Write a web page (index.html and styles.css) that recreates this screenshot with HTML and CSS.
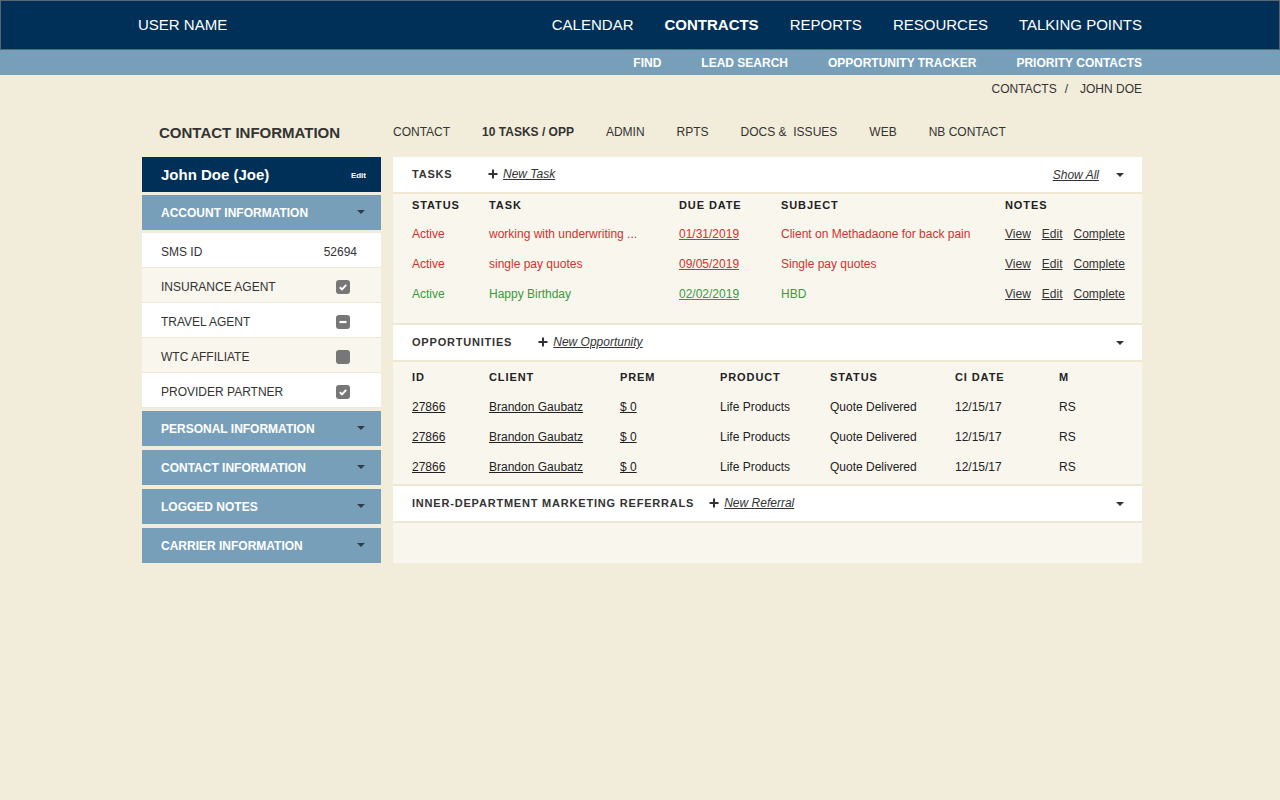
FILE: index.html
```html
<!DOCTYPE html>
<html lang="en">
<head>
<meta charset="utf-8">
<title>Contact Information</title>
<link rel="stylesheet" href="styles.css">
</head>
<body>
<header class="topbar">
  <div class="wrap topbar-inner">
    <div class="user">USER NAME</div>
    <nav class="mainnav">
      <a>CALENDAR</a>
      <a class="active">CONTRACTS</a>
      <a>REPORTS</a>
      <a>RESOURCES</a>
      <a>TALKING POINTS</a>
    </nav>
  </div>
</header>
<div class="subbar">
  <nav class="wrap subnav">
    <a>FIND</a>
    <a>LEAD SEARCH</a>
    <a>OPPORTUNITY TRACKER</a>
    <a>PRIORITY CONTACTS</a>
  </nav>
</div>
<div class="wrap crumbs">
  <span>CONTACTS</span><span class="slash">/</span><span>JOHN DOE</span>
</div>
<div class="wrap page">
  <div class="tabrow">
    <h1 class="pagetitle">CONTACT INFORMATION</h1>
    <nav class="tabs">
      <a>CONTACT</a>
      <a class="active">10 TASKS / OPP</a>
      <a>ADMIN</a>
      <a>RPTS</a>
      <a>DOCS &amp;&nbsp; ISSUES</a>
      <a>WEB</a>
      <a>NB CONTACT</a>
    </nav>
  </div>
  <div class="columns">
    <aside class="sidebar">
      <div class="namebar"><span class="name">John Doe (Joe)</span><a class="edit">Edit</a></div>
      <div class="bar"><span>ACCOUNT INFORMATION</span><i class="caret"></i></div>
      <div class="info">
        <div class="irow"><span>SMS ID</span><span class="val">52694</span></div>
        <div class="irow alt"><span>INSURANCE AGENT</span>
          <svg class="cb" width="14" height="14" viewBox="0 0 14 14"><rect width="14" height="14" rx="3" fill="#777"/><path d="M3.8 7.3 L6 9.4 L10.2 4.9" fill="none" stroke="#fff" stroke-width="1.9"/></svg></div>
        <div class="irow"><span>TRAVEL AGENT</span>
          <svg class="cb" width="14" height="14" viewBox="0 0 14 14"><rect width="14" height="14" rx="3" fill="#777"/><path d="M3.5 7 H10.5" fill="none" stroke="#fff" stroke-width="2.2"/></svg></div>
        <div class="irow alt"><span>WTC AFFILIATE</span>
          <svg class="cb" width="14" height="14" viewBox="0 0 14 14"><rect width="14" height="14" rx="3" fill="#777"/></svg></div>
        <div class="irow"><span>PROVIDER PARTNER</span>
          <svg class="cb" width="14" height="14" viewBox="0 0 14 14"><rect width="14" height="14" rx="3" fill="#777"/><path d="M3.8 7.3 L6 9.4 L10.2 4.9" fill="none" stroke="#fff" stroke-width="1.9"/></svg></div>
      </div>
      <div class="bar"><span>PERSONAL INFORMATION</span><i class="caret"></i></div>
      <div class="bar"><span>CONTACT INFORMATION</span><i class="caret"></i></div>
      <div class="bar"><span>LOGGED NOTES</span><i class="caret"></i></div>
      <div class="bar"><span>CARRIER INFORMATION</span><i class="caret"></i></div>
    </aside>
    <main class="main">
      <section class="panel">
        <div class="phead">
          <span class="ptitle tasks-title">TASKS</span>
          <a class="newlink"><svg width="10" height="10" viewBox="0 0 10 10"><path d="M5 0.5 V9.5 M0.5 5 H9.5" stroke="#333" stroke-width="2"/></svg><u>New Task</u></a>
          <span class="spacer"></span>
          <a class="showall">Show All</a>
          <i class="caret dark"></i>
        </div>
        <div class="pbody tasks-body">
          <table class="tbl tasks">
            <colgroup><col class="c1"><col class="c2"><col class="c3"><col class="c4"><col></colgroup>
            <thead><tr><th>STATUS</th><th>TASK</th><th>DUE DATE</th><th>SUBJECT</th><th>NOTES</th></tr></thead>
            <tbody>
              <tr class="red"><td>Active</td><td>working with underwriting ...</td><td><u>01/31/2019</u></td><td>Client on Methadaone for back pain</td><td class="notes"><a>View</a><a>Edit</a><a>Complete</a></td></tr>
              <tr class="red"><td>Active</td><td>single pay quotes</td><td><u>09/05/2019</u></td><td>Single pay quotes</td><td class="notes"><a>View</a><a>Edit</a><a>Complete</a></td></tr>
              <tr class="green"><td>Active</td><td>Happy Birthday</td><td><u>02/02/2019</u></td><td>HBD</td><td class="notes"><a>View</a><a>Edit</a><a>Complete</a></td></tr>
            </tbody>
          </table>
        </div>
      </section>
      <section class="panel">
        <div class="phead">
          <span class="ptitle opp-title">OPPORTUNITIES</span>
          <a class="newlink"><svg width="10" height="10" viewBox="0 0 10 10"><path d="M5 0.5 V9.5 M0.5 5 H9.5" stroke="#333" stroke-width="2"/></svg><u>New Opportunity</u></a>
          <span class="spacer"></span>
          <i class="caret dark"></i>
        </div>
        <div class="pbody opp-body">
          <table class="tbl opps">
            <colgroup><col class="o1"><col class="o2"><col class="o3"><col class="o4"><col class="o5"><col class="o6"><col></colgroup>
            <thead><tr><th>ID</th><th>CLIENT</th><th>PREM</th><th>PRODUCT</th><th>STATUS</th><th>CI DATE</th><th>M</th></tr></thead>
            <tbody>
              <tr><td><u>27866</u></td><td><u>Brandon Gaubatz</u></td><td><u>$ 0</u></td><td>Life Products</td><td>Quote Delivered</td><td>12/15/17</td><td>RS</td></tr>
              <tr><td><u>27866</u></td><td><u>Brandon Gaubatz</u></td><td><u>$ 0</u></td><td>Life Products</td><td>Quote Delivered</td><td>12/15/17</td><td>RS</td></tr>
              <tr><td><u>27866</u></td><td><u>Brandon Gaubatz</u></td><td><u>$ 0</u></td><td>Life Products</td><td>Quote Delivered</td><td>12/15/17</td><td>RS</td></tr>
            </tbody>
          </table>
        </div>
      </section>
      <section class="panel">
        <div class="phead">
          <span class="ptitle ref-title">INNER-DEPARTMENT MARKETING REFERRALS</span>
          <a class="newlink"><svg width="10" height="10" viewBox="0 0 10 10"><path d="M5 0.5 V9.5 M0.5 5 H9.5" stroke="#333" stroke-width="2"/></svg><u>New Referral</u></a>
          <span class="spacer"></span>
          <i class="caret dark"></i>
        </div>
        <div class="pbody ref-body"></div>
      </section>
    </main>
  </div>
</div>
</body>
</html>
```
FILE: styles.css
```css
* { box-sizing: border-box; }
html, body { margin: 0; padding: 0; }
body {
  background: #f2ecda;
  font-family: "Liberation Sans", Arial, sans-serif;
  color: #333;
  font-size: 12px;
}
a { color: inherit; text-decoration: none; cursor: pointer; }
h1 { margin: 0; }

.wrap { width: 1004px; margin: 0 auto; }

/* top bar */
.topbar {
  background: #003057;
  height: 50px;
  border: 1px solid #5b6672;
}
.topbar-inner {
  height: 47px;
  display: flex;
  align-items: center;
  color: #fff;
  font-size: 15px;
}
.user { flex: 1; }
.mainnav { display: flex; gap: 31px; }
.mainnav a.active { font-weight: bold; }

.subbar { background: #789fba; height: 25px; }
.subnav {
  height: 25px;
  display: flex;
  justify-content: flex-end;
  align-items: center;
  gap: 40px;
  color: #fff;
  font-weight: bold;
  font-size: 12px;
  padding-top: 1px;
}

.crumbs {
  height: 26px;
  display: flex;
  justify-content: flex-end;
  align-items: center;
  font-size: 12px;
  color: #333;
  padding-top: 1px;
}
.crumbs .slash { margin: 0 12px 0 8px; }

/* page */
.page { padding-left: 4px; }
.tabrow {
  height: 56px;
  padding-top: 6px;
  display: flex;
  align-items: center;
}
.pagetitle {
  width: 251px;
  padding-left: 17px;
  font-size: 15px;
  font-weight: bold;
  color: #333;
}
.tabs { display: flex; gap: 32px; font-size: 12px; color: #333; }
.tabs a.active { font-weight: bold; }

.columns { display: flex; gap: 12px; align-items: flex-start; }

/* sidebar */
.sidebar { width: 239px; flex: none; display: flex; flex-direction: column; }
.namebar {
  height: 35px;
  background: #003057;
  color: #fff;
  display: flex;
  align-items: center;
  justify-content: space-between;
  padding: 0 15px 0 19px;
}
.name { font-size: 15px; font-weight: bold; }
.edit { font-size: 8px; font-weight: bold; padding-top: 2px; }
.bar {
  height: 35px;
  background: #789fba;
  color: #fff;
  font-weight: bold;
  font-size: 12px;
  display: flex;
  align-items: center;
  justify-content: space-between;
  padding: 0 16px 0 19px;
  margin-top: 4px;
}
.namebar + .bar { margin-top: 3px; }
.caret {
  display: inline-block;
  width: 0; height: 0;
  border-left: 4px solid transparent;
  border-right: 4px solid transparent;
  border-top: 4px solid #333d47;
  margin-top: -2px;
}
.caret.dark { border-top-color: #333; margin-top: 3px; }

.info { margin-top: 3px; margin-bottom: -1px; }
.irow {
  height: 35px;
  background: #fff;
  border-bottom: 1px solid #efe8d4;
  display: flex;
  align-items: center;
  justify-content: space-between;
  padding: 4px 24px 0 19px;
  font-size: 12px;
  color: #333;
}
.irow.alt { background: #f9f6ee; }
.irow .cb { margin-right: 7px; }

/* main panels */
.main { flex: 1; display: flex; flex-direction: column; }
.panel { background: #f9f6ee; }
.phead {
  height: 37px;
  background: #fff;
  display: flex;
  align-items: center;
  padding: 0 18px 2px 19px;
  border-bottom: 2px solid #efe7d3;
}
.panel + .panel .phead { border-top: 2px solid #efe7d3; height: 39px; }
.ptitle {
  font-size: 11px;
  font-weight: bold;
  letter-spacing: 0.8px;
  color: #333;
}
.tasks-title { width: 76px; }
.opp-title { margin-right: 26px; }
.ref-title { margin-right: 15px; }
.newlink {
  display: flex;
  align-items: center;
  gap: 5px;
  font-style: italic;
  font-size: 12px;
  color: #333;
}
.newlink u { padding-top: 1px; }
.spacer { flex: 1; }
.showall {
  font-style: italic;
  text-decoration: underline;
  font-size: 12px;
  color: #333;
  margin-right: 17px;
  padding-top: 3px;
}

.tbl {
  width: 100%;
  border-collapse: collapse;
  table-layout: fixed;
  font-size: 12px;
}
.tbl th {
  text-align: left;
  font-size: 11px;
  font-weight: bold;
  letter-spacing: 0.9px;
  color: #222;
  padding: 0;
}
.tbl td { padding: 0; white-space: nowrap; color: #222; }
.tbl th:first-child, .tbl td:first-child { padding-left: 19px; }

.tasks-body { padding-bottom: 14px; }
.tasks thead tr { height: 25px; }
.tasks thead th { padding-bottom: 4px; }
.tasks tbody tr { height: 30px; }
.tasks col.c1 { width: 96px; }
.tasks col.c2 { width: 190px; }
.tasks col.c3 { width: 102px; }
.tasks col.c4 { width: 224px; }
.tasks tr.red td { color: #d3312c; }
.tasks tr.green td { color: #3a9a3a; }
.tasks td.notes { display: flex; gap: 11px; height: 30px; align-items: center; }
.tasks td.notes a { color: #333; text-decoration: underline; }

.opp-body { padding-bottom: 2px; }
.opps thead tr { height: 30px; }
.opps tbody tr { height: 30px; }
.opps col.o1 { width: 96px; }
.opps col.o2 { width: 131px; }
.opps col.o3 { width: 100px; }
.opps col.o4 { width: 110px; }
.opps col.o5 { width: 125px; }
.opps col.o6 { width: 104px; }

.ref-body { height: 40px; }
```
